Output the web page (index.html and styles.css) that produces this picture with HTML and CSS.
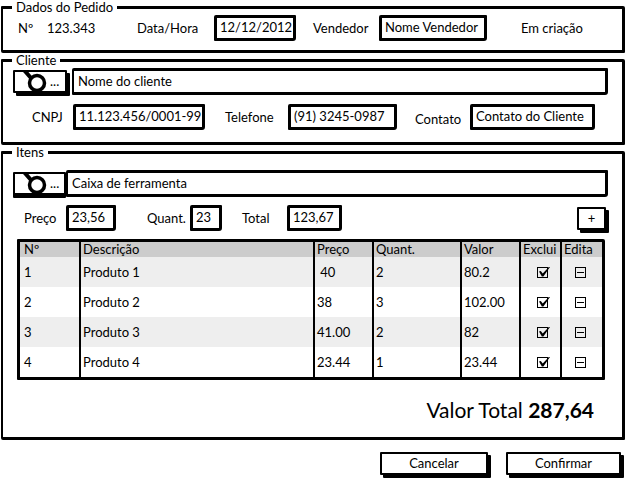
FILE: index.html
```html
<!DOCTYPE html>
<html lang="pt-BR">
<head>
<meta charset="utf-8">
<meta name="viewport" content="width=device-width, initial-scale=1">
<title>Pedido</title>
<link rel="stylesheet" href="styles.css">
</head>
<body>
<form class="order">
  <fieldset class="group">
    <legend>Dados do Pedido</legend>
    <div class="row row-order">
      <span>Nº</span>
      <span>123.343</span>
      <label for="date">Data/Hora</label>
      <input class="field" id="date" type="text" value="12/12/2012">
      <label for="seller">Vendedor</label>
      <input class="field" id="seller" type="text" value="Nome Vendedor">
      <span class="status">Em criação</span>
    </div>
  </fieldset>

  <fieldset class="group group-client">
    <legend>Cliente</legend>
    <div class="search">
      <button class="btn btn-search" type="button" aria-label="Buscar cliente">
        <svg class="lens" viewBox="0 0 23 22" aria-hidden="true"><path class="handle" d="M0 -2 7 6"/><circle cx="13" cy="11" r="7.500"/></svg><span>...</span>
      </button>
      <input class="field field-wide" type="text" aria-label="Nome do cliente" value="Nome do cliente">
    </div>
    <div class="row row-client">
      <label for="cnpj">CNPJ</label>
      <input class="field" id="cnpj" type="text" value="11.123.456/0001-99">
      <label for="phone">Telefone</label>
      <input class="field" id="phone" type="text" value="(91) 3245-0987">
      <label class="low" for="contact">Contato</label>
      <input class="field" id="contact" type="text" value="Contato do Cliente">
    </div>
  </fieldset>

  <fieldset class="group group-items">
    <legend>Itens</legend>
    <div class="search search-joined">
      <button class="btn btn-search" type="button" aria-label="Buscar item">
        <svg class="lens" viewBox="0 0 23 22" aria-hidden="true"><path class="handle" d="M0 -2 7 6"/><circle cx="13" cy="11" r="7.500"/></svg><span>...</span>
      </button>
      <input class="field field-wide" type="text" aria-label="Item" value="Caixa de ferramenta">
    </div>
    <div class="row row-item">
      <label for="price">Preço</label>
      <input class="field" id="price" type="text" value="23,56">
      <label for="qty">Quant.</label>
      <input class="field" id="qty" type="text" value="23">
      <label for="total">Total</label>
      <input class="field" id="total" type="text" value="123,67">
      <button class="btn btn-add" type="button" aria-label="Adicionar item">+</button>
    </div>
    <table class="items">
      <colgroup><col class="c-num"><col><col class="c-price"><col class="c-qty"><col class="c-value"><col class="c-del"><col class="c-edit"></colgroup>
      <thead>
        <tr><th>Nº</th><th>Descrição</th><th>Preço</th><th>Quant.</th><th>Valor</th><th>Exclui</th><th>Edita</th></tr>
      </thead>
      <tbody>
        <tr><td>1</td><td>Produto 1</td><td>&nbsp;40</td><td>2</td><td>80.2</td><td class="act"><input class="tick" type="checkbox" aria-label="Excluir produto 1" checked></td><td class="act"><button class="minus" type="button" aria-label="Editar produto 1"></button></td></tr>
        <tr><td>2</td><td>Produto 2</td><td>38</td><td>3</td><td>102.00</td><td class="act"><input class="tick" type="checkbox" aria-label="Excluir produto 2" checked></td><td class="act"><button class="minus" type="button" aria-label="Editar produto 2"></button></td></tr>
        <tr><td>3</td><td>Produto 3</td><td>41.00</td><td>2</td><td>82</td><td class="act"><input class="tick" type="checkbox" aria-label="Excluir produto 3" checked></td><td class="act"><button class="minus" type="button" aria-label="Editar produto 3"></button></td></tr>
        <tr><td>4</td><td>Produto 4</td><td>23.44</td><td>1</td><td>23.44</td><td class="act"><input class="tick" type="checkbox" aria-label="Excluir produto 4" checked></td><td class="act"><button class="minus" type="button" aria-label="Editar produto 4"></button></td></tr>
      </tbody>
    </table>
    <p class="sum">Valor Total <strong>287,64</strong></p>
  </fieldset>

  <div class="actions">
    <button class="btn btn-cancel" type="button">Cancelar</button>
    <button class="btn btn-confirm" type="submit">Confirmar</button>
  </div>
</form>
</body>
</html>
```
FILE: styles.css
```css
* { box-sizing: border-box; }

body {
  margin: 0;
  background: #fff;
  color: #000;
  font: 13px/16px Lato, sans-serif;
}

input, button { font: inherit; color: inherit; }

.order { padding: 0 0 0 1px; }

.group {
  min-width: 0;
  margin: 0;
  padding: 1px 14px 9px 10px;
  border: 3px solid #000;
  border-left-width: 2px;
  border-radius: 1px 2px 1px 2px;
}

legend {
  margin-left: -1px;
  padding: 0 4px;
  line-height: 14px;
}

.group-client { padding-bottom: 12px; }
.group-items { padding-top: 11px; }

.row {
  display: grid;
  align-items: center;
  white-space: nowrap;
}

.row-order { grid-template-columns: 29px 90px 77px 82px 17px 66px 108px 1fr; padding-left: 5px; }
.row-order label[for="seller"] { grid-column: 6; }
.status { padding-left: 34px; }

.row-client { grid-template-columns: 41px 132px 20px 63px 109px 18px 55px 125px; padding-left: 19px; margin-top: 9px; }
.row-client label[for="phone"] { grid-column: 4; }
.row-client label[for="contact"] { grid-column: 7; }
.low { padding-top: 4px; }

.row-item { grid-template-columns: 42px 50px 31px 43px 32px 20px 45px 55px 1fr; padding-left: 11px; margin-top: 8px; }
.row-item label[for="qty"] { grid-column: 4; }
.row-item label[for="total"] { grid-column: 7; }

.field {
  width: 100%;
  min-width: 0;
  height: 26px;
  padding: 0 0 2px 3px;
  border: 3px solid #000;
  border-radius: 2px 1px 3px 1px;
  background: #fff;
  outline: 0;
}

.field-wide { flex: 1; height: 27px; padding-left: 4px; border-left-width: 2px; }

.btn {
  padding: 0;
  border: 2px solid #000;
  border-radius: 1px;
  background: #fff;
  box-shadow: 3px 3px 0 #000;
}

.search { display: flex; align-items: flex-start; gap: 5px; }
.search-joined { gap: 0; }

.btn-search {
  display: flex;
  flex: none;
  width: 54px;
  height: 23px;
  margin-top: 2px;
  padding-left: 9px;
  gap: 3px;
  overflow: hidden;
}

.search-joined .btn-search { width: 53px; box-shadow: 0 3px 0 #000; }
.btn-search span { line-height: 18px; }

.lens {
  flex: none;
  width: 23px;
  height: 22px;
  overflow: visible;
  fill: none;
  stroke: #000;
  stroke-width: 3.5;
}

.handle { stroke-width: 4; }

.btn-add { width: 29px; height: 23px; margin-right: 2px; justify-self: end; }

.items {
  width: calc(100% - 7px);
  margin: 8px 0 0 4px;
  border: 3px solid #000;
  border-radius: 1px 2px 1px 1px;
  border-spacing: 0;
  table-layout: fixed;
}

.c-num { width: 59px; }
.c-price { width: 59px; }
.c-qty { width: 88px; }
.c-value { width: 59px; }
.c-del { width: 41px; }
.c-edit { width: 42px; }

.items th, .items td {
  padding: 0 0 0 2px;
  border-left: 2px solid #000;
  text-align: left;
  font-weight: 400;
  line-height: 15px;
  white-space: nowrap;
}

.items th:first-child, .items td:first-child { border-left: 0; padding-left: 4px; }
.items th { height: 15px; background: #ccc; }
.items td { height: 30px; }
.items tbody tr:nth-child(odd) { background: #eee; }
.items td.act { padding: 0 0 0 4px; text-align: center; line-height: 0; }
.items td.act:last-child { padding: 0 4px 0 0; }

.tick, .minus {
  appearance: none;
  position: relative;
  width: 11px;
  height: 11px;
  margin: 0;
  padding: 0;
  border: 1px solid #000;
  background: transparent;
}

.tick:checked::before {
  content: "";
  position: absolute;
  left: 1px;
  top: -1px;
  width: 11px;
  height: 10px;
  background: #000;
  clip-path: polygon(0 50%, 16% 46%, 34% 70%, 94% 0, 100% 4%, 40% 100%, 26% 100%);
}

.minus::before {
  content: "";
  display: block;
  width: 7px;
  height: 1px;
  margin: 0 auto;
  background: #000;
}

.sum {
  margin: 19px 14px 7px 0;
  font-size: 21px;
  line-height: 22px;
  text-align: right;
}

.actions {
  display: flex;
  justify-content: flex-end;
  gap: 18px;
  padding: 12px 4px 4px 0;
}

.actions .btn { height: 23px; padding-bottom: 2px; }
.btn-cancel { width: 108px; }
.btn-confirm { width: 115px; }
```
